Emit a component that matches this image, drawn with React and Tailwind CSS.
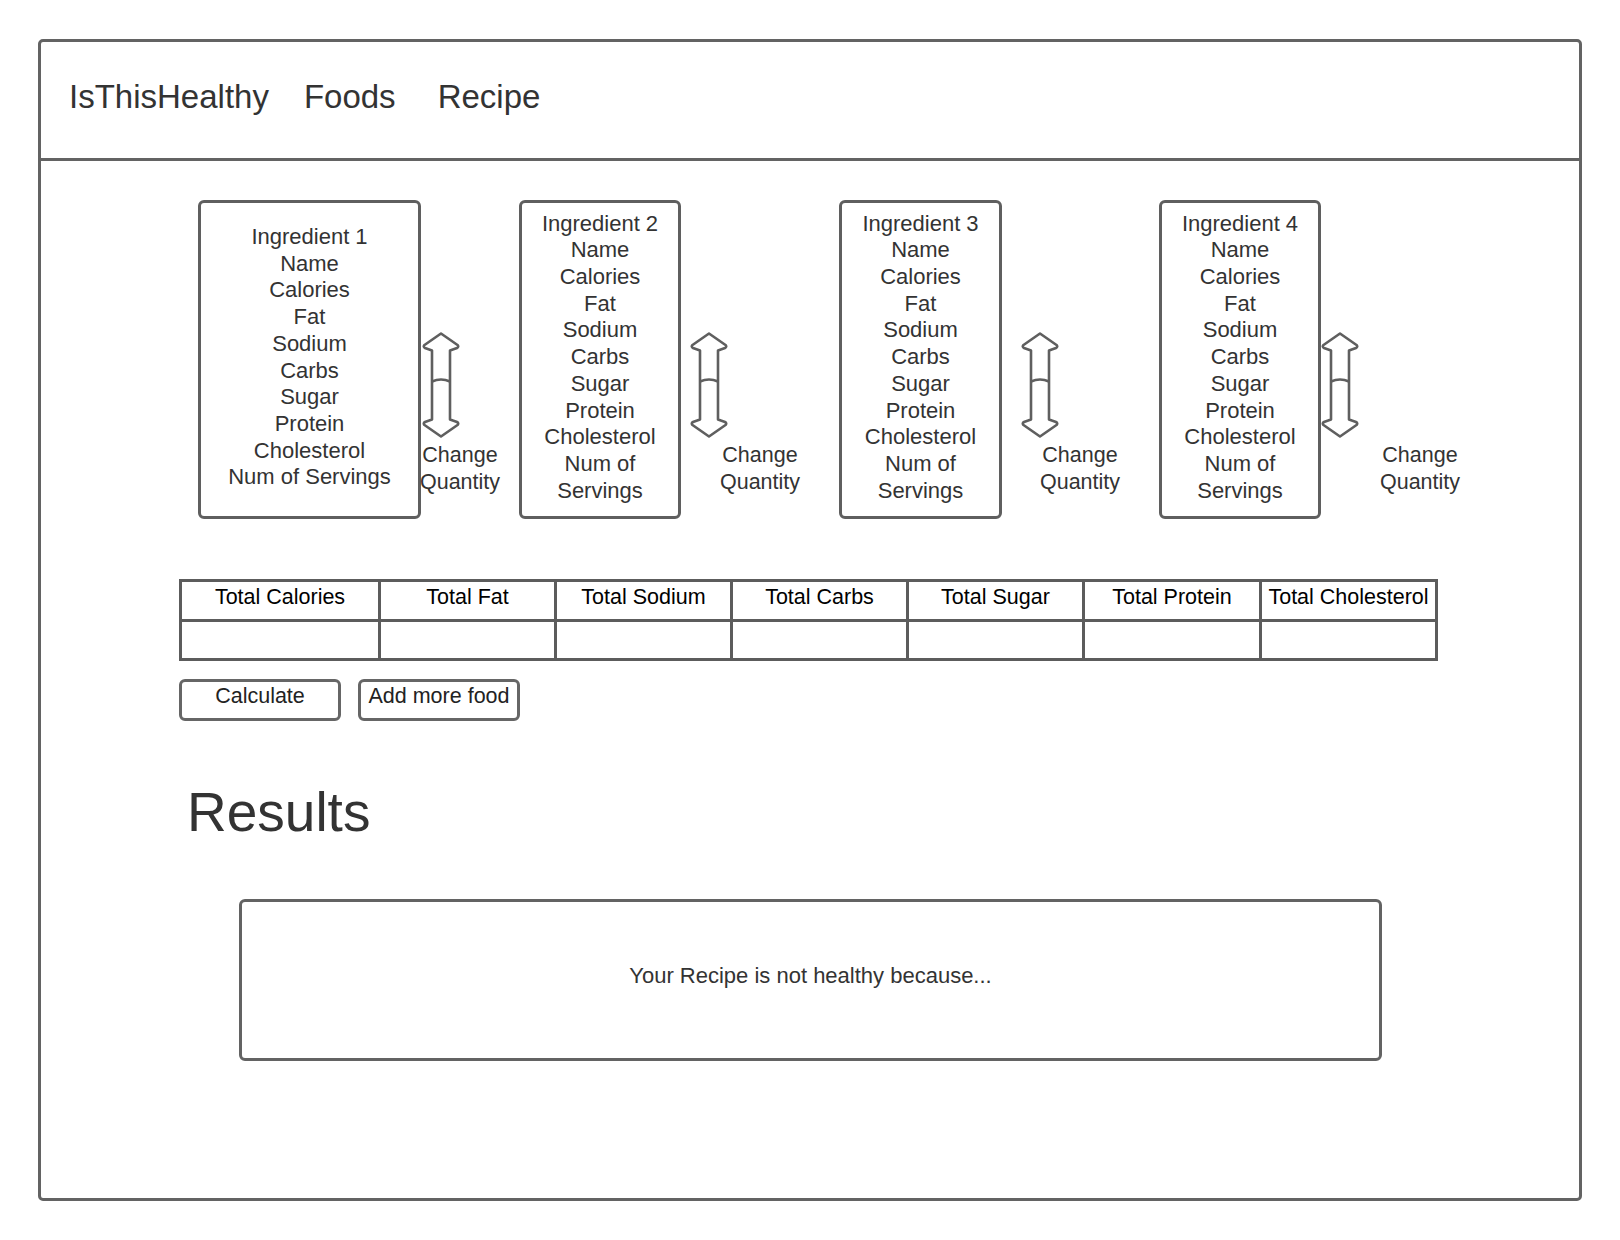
const fields = [
  "Name",
  "Calories",
  "Fat",
  "Sodium",
  "Carbs",
  "Sugar",
  "Protein",
  "Cholesterol",
  "Num of Servings",
];

const totals = [
  "Total Calories",
  "Total Fat",
  "Total Sodium",
  "Total Carbs",
  "Total Sugar",
  "Total Protein",
  "Total Cholesterol",
];

const groups = [
  { n: 1, group: "w-[321px]", box: "w-[223px]", arrow: "ml-0", label: "-ml-px" },
  { n: 2, group: "w-[320px]", box: "w-[162px]", arrow: "ml-[8px]", label: "ml-[39px]" },
  { n: 3, group: "w-[320px]", box: "w-[163px]", arrow: "ml-[18px]", label: "ml-[38px]" },
  { n: 4, group: "w-[300px]", box: "w-[162px]", arrow: "-ml-px", label: "ml-[59px]" },
];

const UpDownArrow = () => (
  <svg width="40" height="106" viewBox="0 0 40 106" fill="none">
    <path
      d="M20 1.5 L36.5 13 Q38.2 14.8 36 16 L29 18.5 L29 87.5 L36 90 Q38.2 91.2 36.5 93 L20 104.5 L3.5 93 Q1.8 91.2 4 90 L11 87.5 L11 18.5 L4 16 Q1.8 14.8 3.5 13 Z"
      fill="white"
      stroke="#5f5f5f"
      strokeWidth="2.6"
      strokeLinejoin="round"
    />
    <path d="M11 49.5 Q20 45.5 29 49.5" stroke="#5f5f5f" strokeWidth="2.6" />
  </svg>
);

const IngredientGroup = ({ n, group, box, arrow, label }) => (
  <div className={`${group} flex items-start shrink-0`}>
    <div
      className={`${box} h-[319px] shrink-0 border-[3px] border-[#5f5f5f] rounded-[6px] flex flex-col items-center justify-center text-center pb-[4px] px-[2px] text-[22px] leading-[26.7px] text-[#333]`}
    >
      <div>Ingredient {n}</div>
      {fields.map((f) => (
        <div key={f}>{f}</div>
      ))}
    </div>
    <div className="flex flex-col pt-[132px]">
      <div className={arrow}>
        <UpDownArrow />
      </div>
      <div
        className={`${label} mt-[4px] w-[80px] flex flex-col items-center text-[21.5px] leading-[26.5px] text-[#333] whitespace-nowrap`}
      >
        <span>Change</span>
        <span>Quantity</span>
      </div>
    </div>
  </div>
);

const App = () => {
  return (
    <div className="w-[1620px] h-[1240px] bg-white overflow-hidden pt-[39px] font-['Liberation_Sans',Arial,sans-serif]">
      <div className="ml-[38px] w-[1544px] h-[1162px] border-[3px] border-[#636363] rounded-[5px]">
        {/* Header */}
        <div className="h-[119px] border-b-[3px] border-[#636363] flex items-center pl-[28px] pb-[6px] text-[33px] text-[#333]">
          <span>IsThisHealthy</span>
          <span className="ml-[35px]">Foods</span>
          <span className="ml-[42px]">Recipe</span>
        </div>

        {/* Ingredients */}
        <div className="mt-[39px] ml-[157px] flex items-start">
          {groups.map((g) => (
            <IngredientGroup key={g.n} {...g} />
          ))}
        </div>

        {/* Totals table */}
        <div className="mt-[60px] ml-[138px] w-fit border-[3px] border-[#5c5c5c] grid grid-cols-[196px_176px_176px_176px_176px_177px_176px] text-[21.5px] text-black">
          {totals.map((t, i) => (
            <div
              key={t}
              className={`h-[37px] pt-[3px] leading-[24px] text-center whitespace-nowrap ${
                i === 0 ? "" : "border-l-[3px] border-[#5c5c5c]"
              }`}
            >
              {t}
            </div>
          ))}
          {totals.map((t, i) => (
            <div
              key={`v-${t}`}
              className={`h-[39px] border-t-[3px] border-[#5c5c5c] ${
                i === 0 ? "" : "border-l-[3px]"
              }`}
            ></div>
          ))}
        </div>

        {/* Actions */}
        <div className="mt-[18px] ml-[138px] flex gap-[17px]">
          <button className="w-[162px] h-[42px] border-[3px] border-[#666] rounded-[6px] flex justify-center items-start pt-[2px] text-[21.5px] leading-[24px] text-[#222]">
            Calculate
          </button>
          <button className="w-[162px] h-[42px] border-[3px] border-[#666] rounded-[6px] flex justify-center items-start pt-[2px] text-[21.5px] leading-[24px] text-[#222] whitespace-nowrap">
            Add more food
          </button>
        </div>

        {/* Results */}
        <h1 className="mt-[64px] ml-[146px] text-[55px] leading-none text-[#333]">
          Results
        </h1>

        <div className="mt-[59px] ml-[198px] w-[1143px] h-[162px] border-[3px] border-[#636363] rounded-[6px] flex items-center justify-center pb-[9px] text-[22px] leading-[24px] text-[#333]">
          Your Recipe is not healthy because...
        </div>
      </div>
    </div>
  );
};

export default App;
